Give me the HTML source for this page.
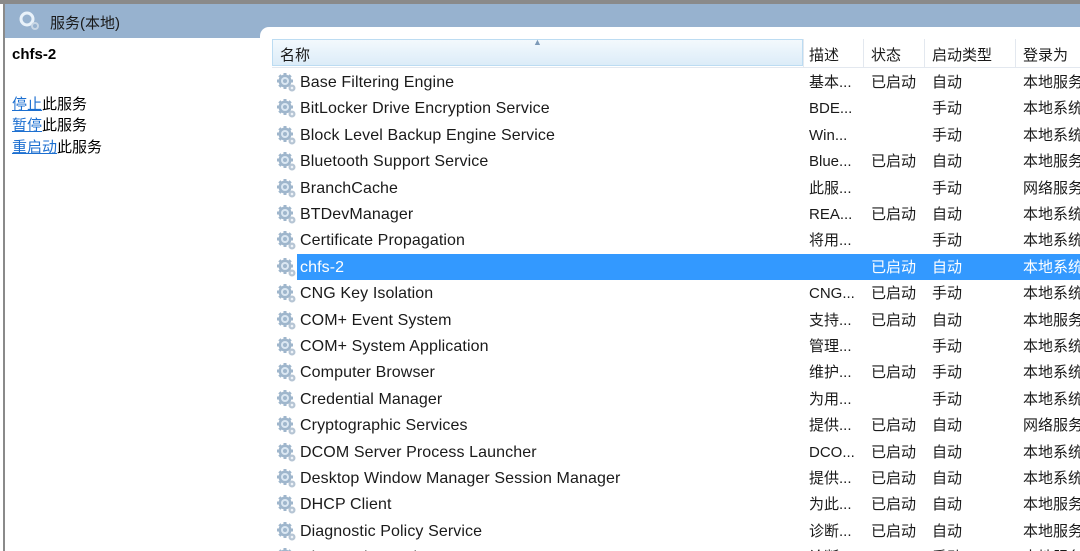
<!DOCTYPE html>
<html><head><meta charset="utf-8"><style>
html{overflow:hidden}
body{margin:0;width:1080px;height:551px;overflow:hidden;background:#fff;font-family:"Liberation Sans","Noto Sans CJK SC",sans-serif;position:relative}
.top{position:absolute;left:0;top:0;width:1080px;height:4px;background:#8a8a8a}
.title{position:absolute;left:5px;top:4px;width:1075px;height:34px;background:#97b2cf}
.title span{position:absolute;left:45px;top:8px;font-size:15px;color:#1a1a1a}
.lb{position:absolute;left:3px;top:4px;width:2px;height:547px;background:#8a8a8a}
.white2{position:absolute;left:260px;top:27px;width:820px;height:20px;background:#fff;border-top-left-radius:9px}
.left{position:absolute;left:12px;font-size:15px;color:#000}
.left a{color:#1c6fd0;text-decoration:underline}
.hdr{position:absolute;top:39px;left:272px;width:808px;height:28px;background:#fff;border-bottom:1px solid #e3e8ef}
.hdr .name{position:absolute;left:0;top:0;width:531px;height:27px;background:linear-gradient(#f3f9fd,#dcecf8);border:1px solid #bcdcf2;box-sizing:border-box}
.hdr div.t{position:absolute;top:5px;font-size:15px;color:#1a1a1a}
.sep{position:absolute;top:0;width:1px;height:28px;background:#e3e8ef}
.row{position:absolute;left:272px;width:808px;height:26px;font-size:15px;color:#1a1a1a;overflow:hidden}
.row.sel{background:#3399ff;color:#fff}
.row span{position:absolute;top:5px;height:18px;line-height:18px;white-space:nowrap}
.row span.n{font-size:16px;letter-spacing:0.1px}
.g{position:absolute;left:5px;top:4px}
</style></head><body>
<div class="top"></div>
<div class="title"><svg style="position:absolute;left:14px;top:7px" width="22" height="20" viewBox="0 0 22 20"><circle cx="8" cy="8" r="6" fill="none" stroke="#e9f2fa" stroke-width="3"/><circle cx="16" cy="15" r="3" fill="none" stroke="#c8d6e4" stroke-width="2"/></svg><span>服务(本地)</span></div>
<div class="lb"></div>
<div class="white2"></div>
<div class="left" style="top:46px;font-weight:bold">chfs-2</div>
<div class="left" style="top:93px"><a>停止</a>此服务</div>
<div class="left" style="top:114px"><a>暂停</a>此服务</div>
<div class="left" style="top:136px"><a>重启动</a>此服务</div>
<div class="hdr"><div class="name"></div>
<div class="t" style="left:8px">名称</div>
<div style="position:absolute;left:261px;top:-2px;font-size:9px;color:#7d9ab8">▲</div>
<div class="sep" style="left:531px"></div><div class="sep" style="left:591px"></div><div class="sep" style="left:652px"></div><div class="sep" style="left:743px"></div>
<div class="t" style="left:537px">描述</div><div class="t" style="left:599px">状态</div><div class="t" style="left:660px">启动类型</div><div class="t" style="left:751px">登录为</div>
</div>
<div id="rows"></div>
<script>
var d=[["Base Filtering Engine","基本...","已启动","自动","本地服务"],
["BitLocker Drive Encryption Service","BDE...","","手动","本地系统"],
["Block Level Backup Engine Service","Win...","","手动","本地系统"],
["Bluetooth Support Service","Blue...","已启动","自动","本地服务"],
["BranchCache","此服...","","手动","网络服务"],
["BTDevManager","REA...","已启动","自动","本地系统"],
["Certificate Propagation","将用...","","手动","本地系统"],
["chfs-2","","已启动","自动","本地系统"],
["CNG Key Isolation","CNG...","已启动","手动","本地系统"],
["COM+ Event System","支持...","已启动","自动","本地服务"],
["COM+ System Application","管理...","","手动","本地系统"],
["Computer Browser","维护...","已启动","手动","本地系统"],
["Credential Manager","为用...","","手动","本地系统"],
["Cryptographic Services","提供...","已启动","自动","网络服务"],
["DCOM Server Process Launcher","DCO...","已启动","自动","本地系统"],
["Desktop Window Manager Session Manager","提供...","已启动","自动","本地系统"],
["DHCP Client","为此...","已启动","自动","本地服务"],
["Diagnostic Policy Service","诊断...","已启动","自动","本地服务"],
["Diagnostic Service Host","诊断...","","手动","本地服务"]];
var gear='<svg class="g" width="20" height="20" viewBox="0 0 20 20"><g fill="#9fb6cc"><circle cx="8" cy="8" r="6.5"/><rect x="6.5" y="0" width="3" height="16"/><rect x="0" y="6.5" width="16" height="3"/><rect x="6.5" y="0" width="3" height="16" transform="rotate(45 8 8)"/><rect x="6.5" y="0" width="3" height="16" transform="rotate(-45 8 8)"/></g><circle cx="8" cy="8" r="4" fill="#dbe7f2"/><circle cx="8" cy="8" r="2" fill="#9fb6cc"/><circle cx="15" cy="15" r="3.5" fill="#b6c5d4"/><circle cx="15" cy="15" r="1.3" fill="#eef3f8"/></svg>';
var h='';
for(var i=0;i<d.length;i++){var r=d[i];var ty=69+26.4*i;
h+='<div class="row'+(i==7?' sel':'')+'" style="top:'+ty+'px">'+
(i==7?'<div style="position:absolute;left:0;top:0;width:25px;height:26px;background:#fff"></div>':'')+gear+
'<span class="n" style="left:28px">'+r[0]+'</span><span style="left:537px">'+r[1]+'</span><span style="left:599px">'+r[2]+'</span><span style="left:660px">'+r[3]+'</span><span style="left:751px">'+r[4]+'</span></div>';}
document.getElementById('rows').innerHTML=h;
</script>
</body></html>
